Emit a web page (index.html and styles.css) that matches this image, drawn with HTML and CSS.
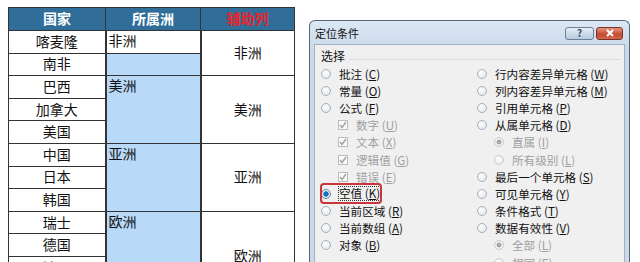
FILE: index.html
```html
<!DOCTYPE html>
<html lang="zh-CN">
<head>
    <meta charset="UTF-8">
    <meta name="viewport" content="width=device-width, initial-scale=1.0">
    <title>定位条件</title>
    <link rel="stylesheet" href="styles.css">
</head>
<body>
    <table class="sheet">
        <tr>
            <th>国家</th>
            <th>所属洲</th>
            <th class="helper">辅助列</th>
        </tr>
        <tr>
            <td>喀麦隆</td>
            <td class="sel active">非洲</td>
            <td class="merged" rowspan="2">非洲</td>
        </tr>
        <tr>
            <td>南非</td>
            <td class="sel"></td>
        </tr>
        <tr>
            <td>巴西</td>
            <td class="sel" rowspan="3">美洲</td>
            <td class="merged" rowspan="3">美洲</td>
        </tr>
        <tr><td>加拿大</td></tr>
        <tr><td>美国</td></tr>
        <tr>
            <td>中国</td>
            <td class="sel" rowspan="3">亚洲</td>
            <td class="merged" rowspan="3">亚洲</td>
        </tr>
        <tr><td>日本</td></tr>
        <tr><td>韩国</td></tr>
        <tr>
            <td>瑞士</td>
            <td class="sel" rowspan="4">欧洲</td>
            <td class="merged" rowspan="4">欧洲</td>
        </tr>
        <tr><td>德国</td></tr>
        <tr><td>法国</td></tr>
        <tr><td>英国</td></tr>
    </table>

    <div class="dialog">
        <div class="titlebar">
            <span class="title">定位条件</span>
            <span class="cap-btn help">?</span>
            <span class="cap-btn close">
                <svg width="10" height="8" viewBox="0 0 10 8"><path d="M2 1 L8 7 M8 1 L2 7" stroke="#fff" stroke-width="2"/></svg>
            </span>
        </div>
        <div class="client">
            <div class="legend"><span>选择</span><i></i></div>
            <div class="options">
                <div class="col">
                    <div class="item"><span class="radio"></span><span>批注 (<u>C</u>)</span></div>
                    <div class="item"><span class="radio"></span><span>常量 (<u>O</u>)</span></div>
                    <div class="item"><span class="radio"></span><span>公式 (<u>F</u>)</span></div>
                    <div class="item sub dim"><span class="check"><svg width="8" height="8" viewBox="0 0 8 8"><path d="M1 4 L3 6.5 L7 1" fill="none" stroke="#a2a2a2" stroke-width="1.4"/></svg></span><span>数字 (<u>U</u>)</span></div>
                    <div class="item sub dim"><span class="check"><svg width="8" height="8" viewBox="0 0 8 8"><path d="M1 4 L3 6.5 L7 1" fill="none" stroke="#a2a2a2" stroke-width="1.4"/></svg></span><span>文本 (<u>X</u>)</span></div>
                    <div class="item sub dim"><span class="check"><svg width="8" height="8" viewBox="0 0 8 8"><path d="M1 4 L3 6.5 L7 1" fill="none" stroke="#a2a2a2" stroke-width="1.4"/></svg></span><span>逻辑值 (<u>G</u>)</span></div>
                    <div class="item sub dim"><span class="check"><svg width="8" height="8" viewBox="0 0 8 8"><path d="M1 4 L3 6.5 L7 1" fill="none" stroke="#a2a2a2" stroke-width="1.4"/></svg></span><span>错误 (<u>E</u>)</span></div>
                    <div class="item marked"><span class="mark"></span><span class="radio on"></span><span class="focus">空值 (<u>K</u>)</span></div>
                    <div class="item"><span class="radio"></span><span>当前区域 (<u>R</u>)</span></div>
                    <div class="item"><span class="radio"></span><span>当前数组 (<u>A</u>)</span></div>
                    <div class="item"><span class="radio"></span><span>对象 (<u>B</u>)</span></div>
                </div>
                <div class="col">
                    <div class="item"><span class="radio"></span><span>行内容差异单元格 (<u>W</u>)</span></div>
                    <div class="item"><span class="radio"></span><span>列内容差异单元格 (<u>M</u>)</span></div>
                    <div class="item"><span class="radio"></span><span>引用单元格 (<u>P</u>)</span></div>
                    <div class="item"><span class="radio"></span><span>从属单元格 (<u>D</u>)</span></div>
                    <div class="item sub dim"><span class="radio dim-on"></span><span>直属 (<u>I</u>)</span></div>
                    <div class="item sub dim"><span class="radio"></span><span>所有级别 (<u>L</u>)</span></div>
                    <div class="item"><span class="radio"></span><span>最后一个单元格 (<u>S</u>)</span></div>
                    <div class="item"><span class="radio"></span><span>可见单元格 (<u>Y</u>)</span></div>
                    <div class="item"><span class="radio"></span><span>条件格式 (<u>T</u>)</span></div>
                    <div class="item"><span class="radio"></span><span>数据有效性 (<u>V</u>)</span></div>
                    <div class="item sub dim"><span class="radio dim-on"></span><span>全部 (<u>L</u>)</span></div>
                    <div class="item sub dim"><span class="radio"></span><span>相同 (<u>E</u>)</span></div>
                </div>
            </div>
        </div>
    </div>
</body>
</html>
```

FILE: styles.css
```css
body {
    margin: 0;
    width: 640px;
    height: 262px;
    overflow: hidden;
    background: #fff;
    display: flex;
    align-items: flex-start;
    font-family: "Liberation Sans", "Noto Sans CJK SC", sans-serif;
}
.sheet {
    margin: 7px 0 0 8px;
    border-collapse: collapse;
    table-layout: fixed;
    width: 287px;
    font-size: 14px;
    color: #111;
}
.sheet th,
.sheet td {
    border: 1px solid #333;
    padding: 0;
    text-align: center;
    line-height: 20px;
}
.sheet th {
    height: 22px;
    background: #306d98;
    color: #fff;
    font-weight: bold;
    font-size: 14px;
}
.sheet th:nth-child(1) { width: 96px; }
.sheet th:nth-child(2) { width: 94px; }
.sheet th.helper {
    color: #e4262d;
}
.sheet td {
    height: 21.6px;
    background: #fff;
}
.sheet td.sel {
    background: #b9d9f8;
    text-align: left;
    vertical-align: top;
    padding-left: 2px;
    border-left: 2px solid #333;
    border-right: 2px solid #333;
}
.sheet td.sel.active {
    background: #fff;
}
.sheet td.merged {
    vertical-align: middle;
}

.dialog {
    margin: 20px 0 0 14px;
    width: 321px;
    height: 260px;
    box-sizing: border-box;
    border: 1px solid #56667a;
    border-bottom: none;
    border-radius: 6px 6px 0 0;
    background: linear-gradient(#dde8f4, #c9d8ea 30px, #cbd9ea);
    padding: 0 4px;
    font-family: "Noto Sans CJK SC", "Liberation Sans", sans-serif;
}
.titlebar {
    height: 22px;
    display: flex;
    align-items: center;
    padding-top: 1px;
}
.title {
    flex: 1;
    font-size: 11px;
    color: #111;
    padding-left: 1px;
}
.cap-btn {
    height: 13px;
    display: flex;
    align-items: center;
    justify-content: center;
    border: 1px solid #6d7f94;
    border-radius: 3px;
    box-sizing: border-box;
}
.help {
    width: 29px;
    margin-right: 2px;
    background: linear-gradient(#e3edf7, #b8cbe0);
    color: #3d4e62;
    font-size: 10px;
    font-weight: bold;
    line-height: 1;
}
.close {
    width: 27px;
    margin-right: 2px;
    background: linear-gradient(#e3957f, #c4492f 60%, #d36a4e);
    border-color: #7a3323;
}
.client {
    height: 240px;
    background: #f0f0f0;
    border: 1px solid #a3b0be;
    border-bottom: none;
    padding: 0 0 0 6px;
    font-size: 11.6px;
    color: #111;
}
.legend {
    height: 18px;
    display: flex;
    align-items: center;
    margin-top: 1px;
}
.legend span {
    padding-right: 4px;
    font-size: 12px;
}
.legend i {
    flex: 1;
    border-top: 1px solid #d6dde4;
    margin-top: 8px;
    margin-right: 4px;
}
.options {
    display: flex;
    padding-top: 1px;
}
.col {
    display: flex;
    flex-direction: column;
}
.col:first-child {
    width: 156px;
}
.item {
    height: 17.2px;
    display: flex;
    align-items: center;
    gap: 8px;
    white-space: nowrap;
}
.item u {
    text-decoration: underline;
}
.item.sub {
    padding-left: 17px;
}
.item.dim {
    color: #a0a0a0;
}
.radio {
    flex: none;
    width: 10px;
    height: 10px;
    box-sizing: border-box;
    border-radius: 50%;
    border: 1px solid #a7b1bb;
    background: radial-gradient(circle at 40% 35%, #fff, #dce2e8);
}
.radio.on {
    border-color: #6d8aa5;
    background: radial-gradient(circle, #1a6fb7 0 2.4px, #e9eef3 3px, #cdd6de);
}
.radio.dim-on {
    border-color: #c5c5c5;
    background: radial-gradient(circle, #a8a8a8 0 2.2px, #f6f6f6 2.8px, #e6e6e6);
}
.item.dim .radio {
    border-color: #cbcbcb;
}
.check {
    flex: none;
    width: 10px;
    height: 10px;
    box-sizing: border-box;
    border: 1px solid #bcbcbc;
    background: #fafafa;
    display: flex;
    align-items: center;
    justify-content: center;
}
.item.marked {
    position: relative;
}
.mark {
    position: absolute;
    left: -1px;
    top: -2.5px;
    width: 62px;
    height: 21px;
    box-sizing: border-box;
    border: 2px solid #c9363e;
    border-radius: 4px;
}
.focus {
    outline: 1px dotted #333;
    line-height: 13px;
}
```
